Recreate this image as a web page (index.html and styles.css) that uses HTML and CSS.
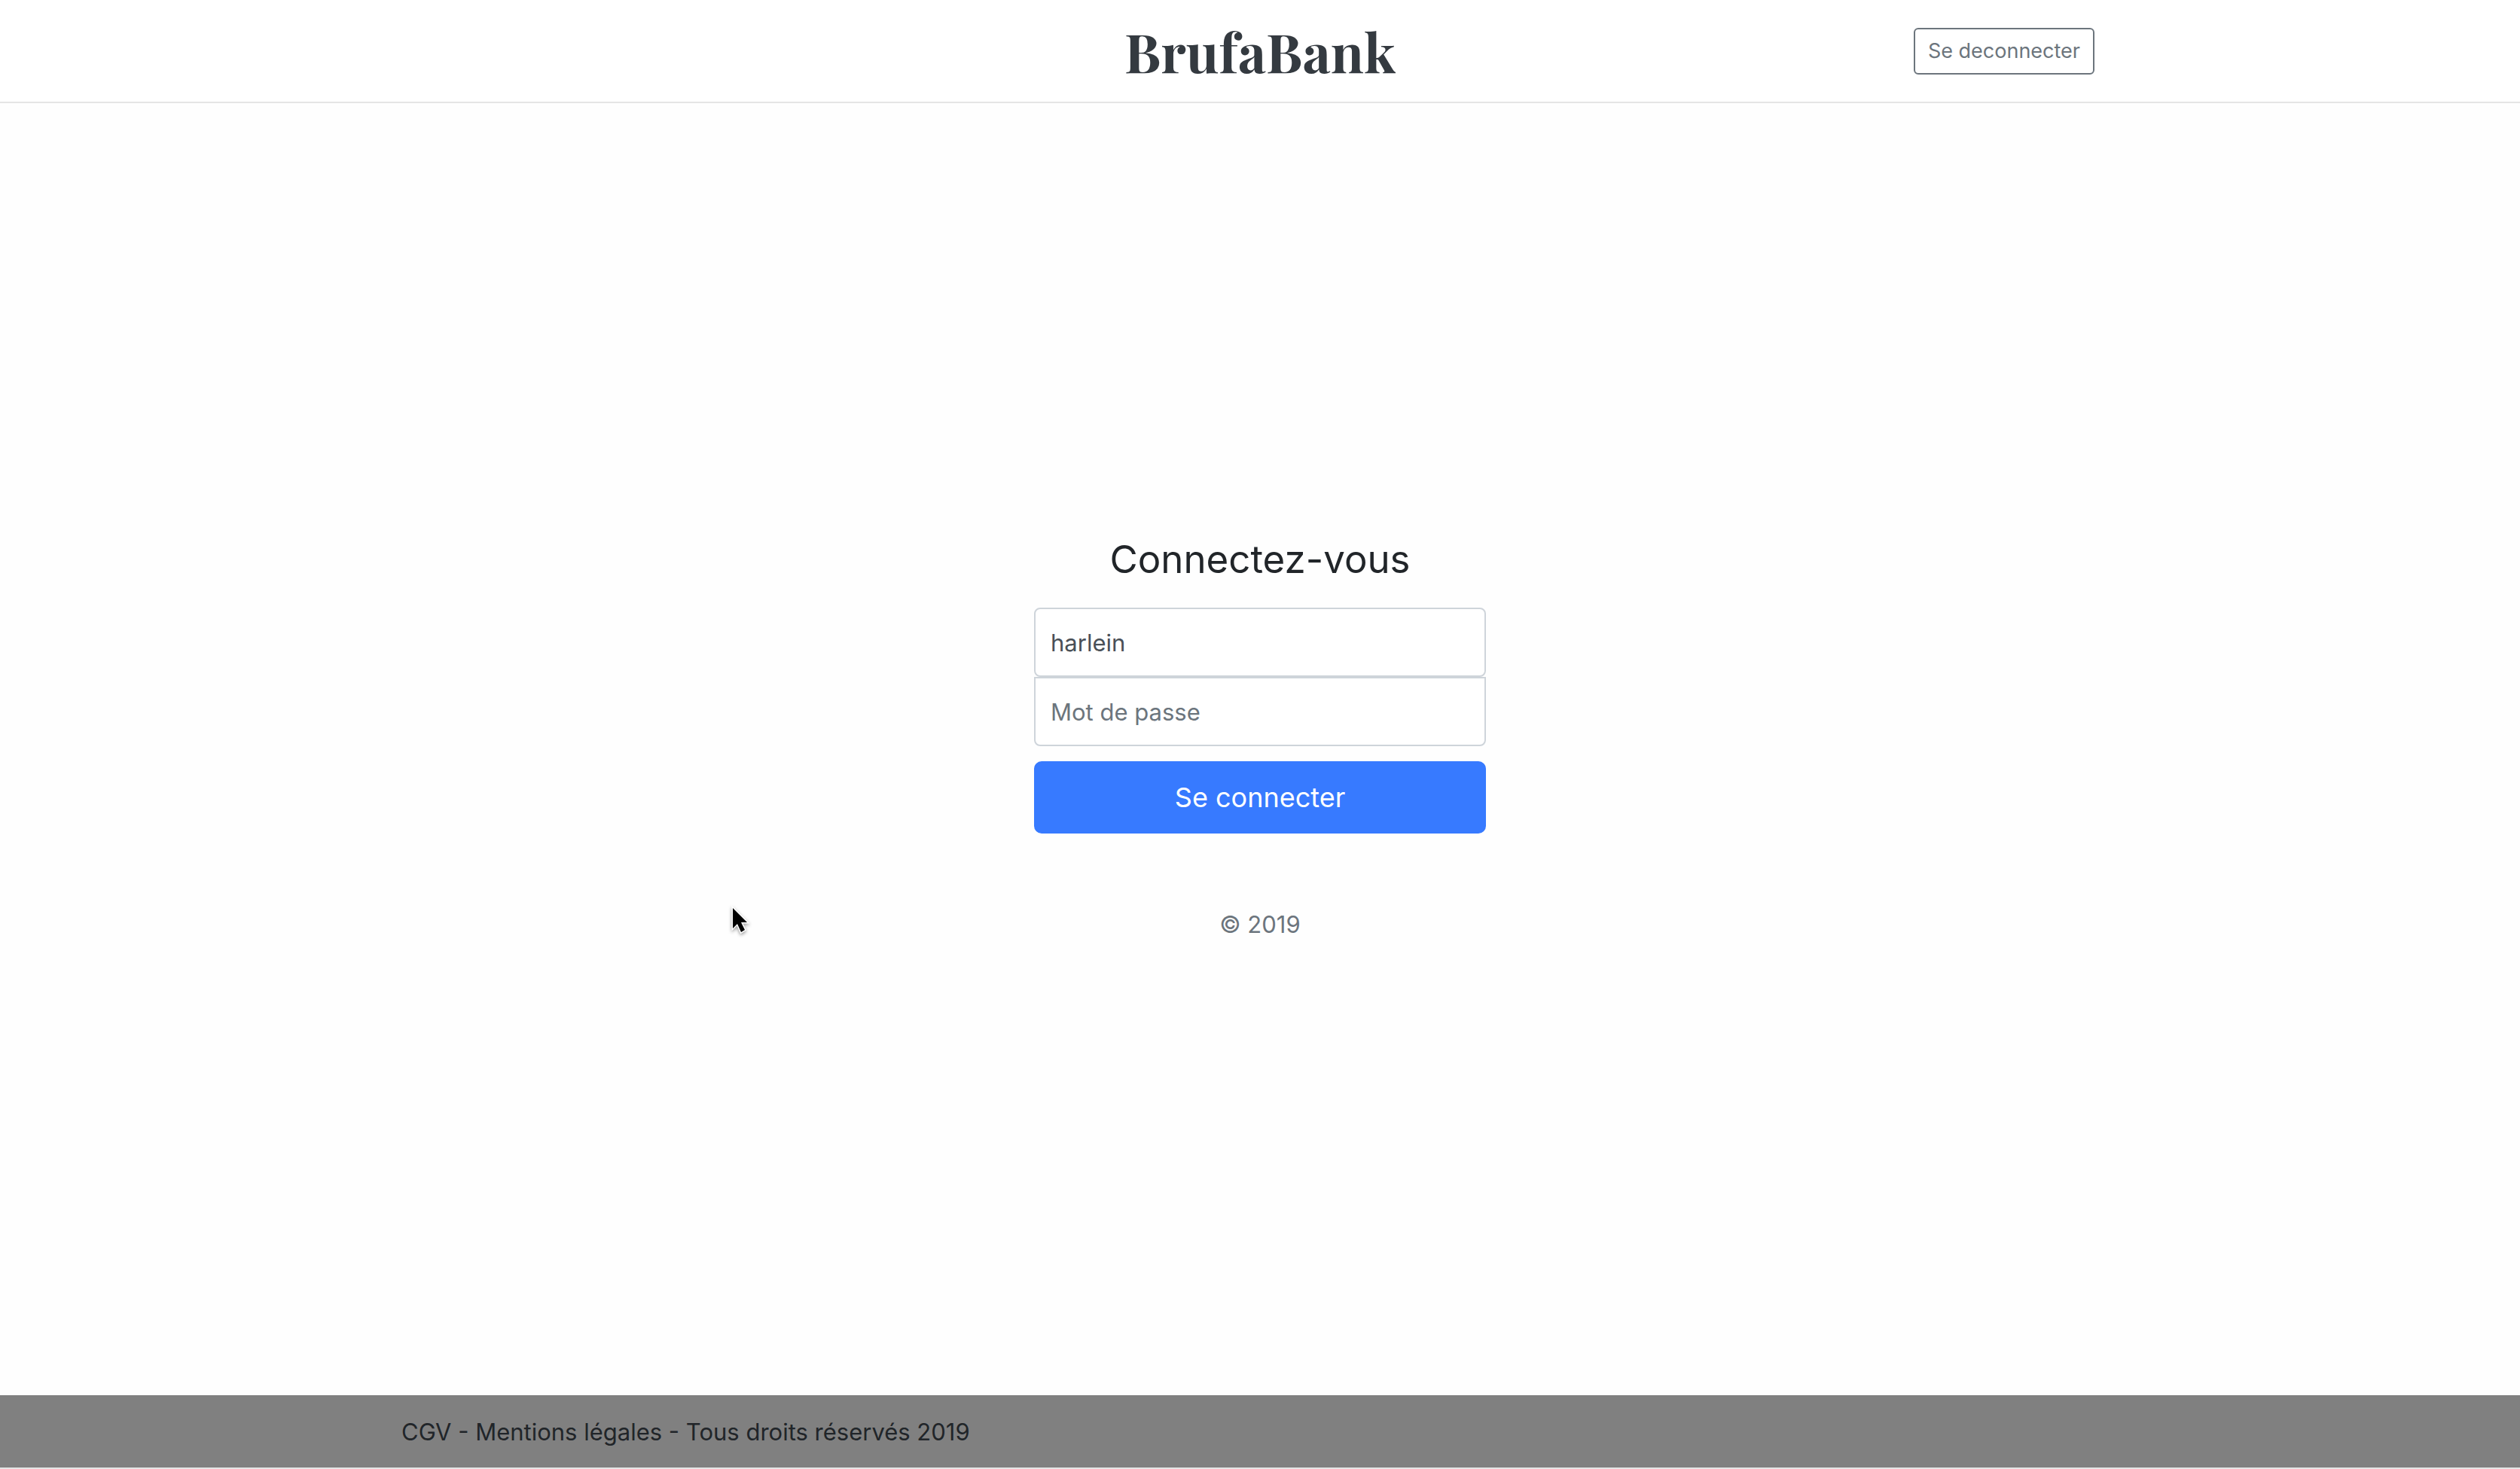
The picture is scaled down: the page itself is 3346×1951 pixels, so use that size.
FILE: index.html
```html
<!DOCTYPE html>
<html lang="fr">
<head>
<meta charset="utf-8">
<meta name="viewport" content="width=device-width, initial-scale=1">
<title>BrufaBank</title>
<link rel="stylesheet" href="styles.css">
</head>
<body>
<header class="site-header">
  <div class="container header-row">
    <a class="brand" href="#">BrufaBank</a>
    <button class="btn btn-outline" type="button">Se deconnecter</button>
  </div>
</header>
<main class="main">
  <form class="signin">
    <h1 class="signin-title">Connectez-vous</h1>
    <input class="field" type="text" aria-label="Identifiant" value="harlein">
    <input class="field field-last" type="password" aria-label="Mot de passe" placeholder="Mot de passe">
    <button class="btn btn-primary" type="submit">Se connecter</button>
    <p class="copyright">© 2019</p>
  </form>
</main>
<footer class="site-footer">
  <div class="container">CGV - Mentions légales - Tous droits réservés 2019</div>
</footer>
<svg class="cursor" width="32" height="44" viewBox="0 0 32 44" aria-hidden="true">
  <path d="M4 4V31L10 25L15 36L20 33L15 23H23Z" fill="#000" stroke="#fff" stroke-width="3" paint-order="stroke"/>
</svg>
</body>
</html>
```
FILE: styles.css
```css
* { box-sizing: border-box; }

body {
  display: flex;
  flex-direction: column;
  min-height: 100vh;
  margin: 0;
  background: #fefefe;
  color: #212529;
  font-family: Inter, "Liberation Sans", sans-serif;
  font-size: 31px;
  line-height: 48px;
}

.container {
  width: 100%;
  max-width: 2280px;
  margin: 0 auto;
}

.site-header {
  padding: 20px 0;
  background: #fff;
  border-bottom: 2px solid #e5e5e5;
}

.header-row {
  display: grid;
  grid-template-columns: 1fr auto 1fr;
  align-items: center;
  padding: 0 32px;
}

.brand {
  grid-column: 2;
  color: #343a40;
  font-family: "Playfair Display", "Liberation Serif", serif;
  font-size: 72px;
  font-weight: 700;
  line-height: 95px;
  text-decoration: none;
}

.btn {
  border: 2px solid;
  font-family: inherit;
  cursor: pointer;
}

.btn-outline {
  justify-self: end;
  padding: 8px 17px;
  border-color: #6c757d;
  border-radius: 6px;
  background: transparent;
  color: #6c757d;
  font-size: 27px;
  line-height: 42px;
}

.main {
  display: flex;
  flex: 1;
  flex-direction: column;
  justify-content: center;
  align-items: center;
}

.signin {
  display: flex;
  flex-direction: column;
  width: 100%;
  max-width: 600px;
}

.signin-title {
  margin: 0 0 28px;
  font-size: 51px;
  font-weight: 400;
  line-height: 72px;
  text-align: center;
}

.field {
  width: 100%;
  height: 92px;
  padding: 20px;
  border: 2px solid #ced4da;
  border-radius: 8px;
  background: #fff;
  color: #495057;
  font-family: inherit;
  font-size: 31px;
}

.field::placeholder { color: #6c757d; opacity: 1; }

.field-last {
  margin-bottom: 20px;
  border-top-left-radius: 0;
  border-top-right-radius: 0;
}

.btn-primary {
  padding: 16px 32px;
  border-color: #377aff;
  border-radius: 10px;
  background: #377aff;
  color: #fff;
  font-size: 36px;
  line-height: 60px;
}

.copyright {
  margin: 97px 0 31px;
  color: #6c757d;
  text-align: center;
}

.site-footer {
  padding: 25px 0 23px;
  background: #808080;
  border-bottom: 2px solid #e5e5e5;
}

/* Pointer floating over the page */
.cursor {
  position: absolute;
  top: 1202px;
  left: 969px;
  filter: drop-shadow(0 2px 2px rgba(0, 0, 0, 0.4));
  pointer-events: none;
}
```
